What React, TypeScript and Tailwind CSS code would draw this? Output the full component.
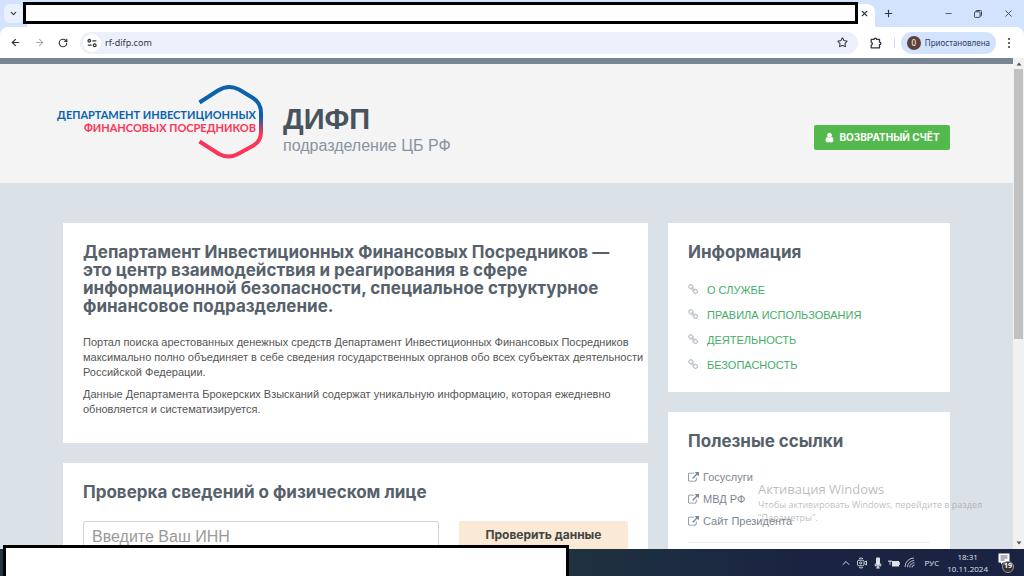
import type { ReactNode } from "react";
import { ArrowLeft, ArrowRight, ChevronDown, ChevronUp, Minus, Plus, RotateCw, Star, X } from "lucide-react";

const EXTERNAL_PATH =
  "M1408 928v320q0 119-84.5 203.5t-203.5 84.5h-832q-119 0-203.5-84.5t-84.5-203.5v-832q0-119 84.5-203.5t203.5-84.5h704q14 0 23 9t9 23v64q0 14-9 23t-23 9h-704q-66 0-113 47t-47 113v832q0 66 47 113t113 47h832q66 0 113-47t47-113v-320q0-14 9-23t23-9h64q14 0 23 9t9 23zm384-864v512q0 26-19 45t-45 19-45-19l-176-176-652 652q-10 10-23 10t-23-10l-114-114q-10-10-10-23t10-23l652-652-176-176q-19-19-19-45t19-45 45-19h512q26 0 45 19t19 45z";
const CHAIN_PATH =
  "M1456 1216q0-40-28-68l-208-208q-28-28-68-28-42 0-72 32 3 3 19 18.5t21.5 21.5 15 19 13 25.5 3.5 27.5q0 40-28 68t-68 28q-15 0-27.5-3.5t-25.5-13-19-15-21.5-21.5-18.5-19q-33 31-33 73 0 40 28 68l206 207q27 27 68 27 40 0 68-26l147-146q28-28 28-67zm-703-705q0-40-28-68l-206-207q-28-28-68-28-39 0-68 27l-147 146q-28 28-28 67 0 40 28 68l208 208q27 27 68 27 42 0 72-31-3-3-19-18.5t-21.5-21.5-15-19-13-25.5-3.5-27.5q0-40 28-68t68-28q15 0 27.5 3.5t25.5 13 19 15 21.5 21.5 18.5 19q33-31 33-73zm895 705q0 120-85 203l-147 146q-83 83-203 83-121 0-204-85l-206-207q-83-83-83-203 0-123 88-209l-88-88q-86 88-208 88-120 0-204-84l-208-208q-84-84-84-204t85-203l147-146q83-83 203-83 121 0 204 85l206 207q83 83 83 203 0 123-88 209l88 88q86-88 208-88 120 0 204 84l208 208q84 84 84 204z";
const USER_PATH =
  "M1536 1399q0 109-62.5 187t-150.5 78h-854q-88 0-150.5-78t-62.5-187q0-85 8.5-160.5t31.5-152 58.5-131 94-89 134.5-34.5q131 128 313 128t313-128q76 0 134.5 34.5t94 89 58.5 131 31.5 152 8.5 160.5zm-256-887q0 159-112.5 271.5t-271.5 112.5-271.5-112.5-112.5-271.5 112.5-271.5 271.5-112.5 271.5 112.5 112.5 271.5z";

function Glyph({ path, className }: { path: string; className: string }) {
  return (
    <svg viewBox="0 0 1792 1792" fill="currentColor" className={className} aria-hidden="true">
      <path d={path} />
    </svg>
  );
}

function IconButton({ label, className = "", children }: { label: string; className?: string; children: ReactNode }) {
  return (
    <button type="button" aria-label={label} className={`flex h-6 w-6 shrink-0 items-center justify-center ${className}`}>
      {children}
    </button>
  );
}

function TabStrip() {
  return (
    <div className="relative flex h-[27px] shrink-0 items-center bg-[#d3e2fd] pl-1">
      <button type="button" aria-label="Поиск вкладок" className="flex h-[19px] w-[19px] items-center justify-center rounded-md bg-[#e9f1fe]">
        <ChevronDown size={9} strokeWidth={3} />
      </button>
      <div className="mt-1 ml-1 flex h-[23px] flex-1 items-start justify-end rounded-t-lg bg-white pt-px pr-[3px]">
        <button type="button" aria-label="Закрыть вкладку" className="flex h-4 w-4 items-center justify-center">
          <X size={9} strokeWidth={3} />
        </button>
      </div>
      <IconButton label="Новая вкладка" className="ml-px">
        <Plus size={11} strokeWidth={2.4} />
      </IconButton>
      <div className="ml-9 flex items-center gap-1.5 pr-1">
        <IconButton label="Свернуть">
          <Minus size={9} strokeWidth={2} />
        </IconButton>
        <IconButton label="Восстановить">
          <svg viewBox="0 0 8 8" className="h-2 w-2" fill="none" stroke="currentColor" strokeWidth="0.9" aria-hidden="true">
            <rect x="0.5" y="1.8" width="5.6" height="5.6" rx="0.8" />
            <path d="M2 1.8V1.3a.8.8 0 0 1 .8-.8h3.6a1.1 1.1 0 0 1 1.1 1.1v3.6a.8.8 0 0 1-.8.8h-.5" />
          </svg>
        </IconButton>
        <IconButton label="Закрыть">
          <X size={11} strokeWidth={1.8} />
        </IconButton>
      </div>
      <div className="absolute top-0.5 right-[166px] left-[23px] h-[22px] border-3 border-black bg-white" />
    </div>
  );
}

function Toolbar() {
  return (
    <div className="bg-[#d3e2fd]">
      <div className="flex h-[31px] shrink-0 items-center rounded-t-lg bg-white pr-[3px] pl-[3px] font-['Noto_Sans',sans-serif] text-[#33373b]">
        <IconButton label="Назад">
          <ArrowLeft size={11} strokeWidth={2.4} />
        </IconButton>
        <IconButton label="Вперёд" className="text-[#a8aaad]">
          <ArrowRight size={11} strokeWidth={2.2} />
        </IconButton>
        <IconButton label="Обновить">
          <RotateCw size={10} strokeWidth={2.8} />
        </IconButton>
        <div className="ml-[5px] flex h-[22px] flex-1 items-center gap-1 rounded-full bg-[#ebf0fa] px-[3px]">
          <button type="button" aria-label="Сведения о сайте" className="flex h-[18px] w-[18px] items-center justify-center rounded-full bg-white">
            <svg viewBox="0 0 10 10" className="h-2.5 w-2.5" fill="none" stroke="currentColor" strokeWidth="1.3" aria-hidden="true">
              <circle cx="2.3" cy="2.8" r="1.3" />
              <path d="M5.3 2.8h4M.7 7.2h4" />
              <circle cx="7.7" cy="7.2" r="1.4" />
            </svg>
          </button>
          <input aria-label="Адресная строка" defaultValue="rf-difp.com" className="min-w-0 flex-1 bg-transparent text-[9px] leading-4 outline-none" />
          <IconButton label="Добавить в закладки">
            <Star size={11} strokeWidth={2.2} />
          </IconButton>
        </div>
        <IconButton label="Расширения" className="ml-1.5">
          <svg viewBox="0 0 12 12" className="h-3 w-3" fill="none" stroke="currentColor" strokeWidth="1.3" strokeLinejoin="round" aria-hidden="true">
            <path d="M1.2 2.4h2.900a1.300 1.300 0 0 1 2.600 0h2.800v2.700a1.300 1.300 0 0 1 0 2.600v3.100H1.200V8.100a1.500 1.500 0 0 0 0-2.900z" />
          </svg>
        </IconButton>
        <div className="mx-1.5 h-2.5 w-px bg-[#c8dcfb]" />
        <button type="button" className="flex h-[22px] items-center gap-1 rounded-full bg-[#d3e2fd] pr-1.5 pl-1.5 text-[8px] text-[#2b3f66]">
          <span className="flex h-3.5 w-3.5 items-center justify-center rounded-full bg-[#5d4037] text-[8px] text-white">0</span>
          Приостановлена
        </button>
        <IconButton label="Меню" className="ml-px">
          <svg viewBox="0 0 4 12" className="h-3 w-1" fill="currentColor" aria-hidden="true">
            <circle cx="2" cy="2" r="1" />
            <circle cx="2" cy="6" r="1" />
            <circle cx="2" cy="10" r="1" />
          </svg>
        </IconButton>
      </div>
    </div>
  );
}

function Logo() {
  return (
    <a href="#" className="block shrink-0" aria-label="Департамент инвестиционных финансовых посредников">
      <svg viewBox="0 0 200 76" className="h-[76px] w-[200px] overflow-visible">
        <defs>
          <linearGradient id="ring" gradientUnits="userSpaceOnUse" x1="0" y1="0" x2="0" y2="76">
            <stop offset="0" stopColor="#0a62ae" />
            <stop offset="0.42" stopColor="#0a62ae" />
            <stop offset="0.64" stopColor="#fc3459" />
            <stop offset="1" stopColor="#fc3459" />
          </linearGradient>
        </defs>
        <path
          d="M136.500 17.500L155 5.500Q165.500 -1 176 4.500L190 13Q198 18 198 28V47Q198 56 190.500 60.500L175 69Q165.500 74 156 69L136.500 56.500"
          fill="none"
          stroke="url(#ring)"
          strokeWidth="4"
          strokeLinejoin="round"
        />
        <text x="193" y="34" textAnchor="end" className="fill-[#0a62ae] font-['Lato',sans-serif] text-[11px] font-bold">
          ДЕПАРТАМЕНТ ИНВЕСТИЦИОННЫХ
        </text>
        <text x="193" y="47" textAnchor="end" className="fill-[#fc3459] font-['Lato',sans-serif] text-[11px] font-bold">
          ФИНАНСОВЫХ ПОСРЕДНИКОВ
        </text>
      </svg>
    </a>
  );
}

function SiteHeader() {
  return (
    <header className="h-[125px] shrink-0 border-t-6 border-[#778692] bg-[#f4f4f4]">
      <div className="mx-auto flex w-full max-w-[887px] items-start pt-[21px]">
        <Logo />
        <div className="ml-5 pt-5">
          <p className="text-[29px] leading-7 font-bold text-[#47535d]">ДИФП</p>
          <p className="mt-[3px] text-base leading-5 text-[#8794a0]">подразделение ЦБ РФ</p>
        </div>
        <a
          href="#"
          className="mt-10 ml-auto flex h-[25px] w-[136px] items-center justify-center gap-1 rounded-xs bg-[#54b94c] font-['Inter',sans-serif] text-[10px] font-bold text-white"
        >
          <Glyph path={USER_PATH} className="h-[11px] w-[11px]" />
          ВОЗВРАТНЫЙ СЧЁТ
        </a>
      </div>
    </header>
  );
}

const HEADING = "font-['Inter',sans-serif] font-bold text-[#56616b]";

const infoLinks = ["О СЛУЖБЕ", "ПРАВИЛА ИСПОЛЬЗОВАНИЯ", "ДЕЯТЕЛЬНОСТЬ", "БЕЗОПАСНОСТЬ"];
const usefulLinks = ["Госуслуги", "МВД РФ", "Сайт Президента"];

function MainColumn() {
  return (
    <main className="flex min-w-0 flex-1 flex-col gap-5">
      <section className="bg-white px-5 pt-5 pb-[26px]">
        <h1 className={`${HEADING} text-[17px] leading-[18px]`}>
          Департамент Инвестиционных Финансовых Посредников — это центр взаимодействия и реагирования в сфере информационной
          безопасности, специальное структурное финансовое подразделение.
        </h1>
        <p className="mt-5 text-[11px] leading-[15px] whitespace-nowrap text-[#555]">
          Портал поиска арестованных денежных средств Департамент Инвестиционных Финансовых Посредников
          <br />
          максимально полно объединяет в себе сведения государственных органов обо всех субъектах деятельности
          <br />
          Российской Федерации.
        </p>
        <p className="mt-[7px] text-[11px] leading-[15px] text-[#555]">
          Данные Департамента Брокерских Взысканий содержат уникальную информацию, которая ежедневно обновляется и
          систематизируется.
        </p>
      </section>
      <section className="bg-white p-5">
        <h2 className={`${HEADING} text-[17px] leading-[18px]`}>Проверка сведений о физическом лице</h2>
        <form className="mt-5 flex gap-5" onSubmit={(event) => event.preventDefault()}>
          <input
            aria-label="ИНН"
            placeholder="Введите Ваш ИНН"
            className="h-8 min-w-0 flex-1 rounded-xs border border-[#d5d5d5] px-2 text-base placeholder:text-[#999]"
          />
          <button type="submit" className="h-7 w-[169px] rounded-xs bg-[#f9e9d5] font-['Inter',sans-serif] text-xs font-bold text-[#444]">
            Проверить данные
          </button>
        </form>
      </section>
    </main>
  );
}

function Sidebar() {
  return (
    <aside className="flex w-[282px] shrink-0 flex-col gap-5">
      <section className="bg-white px-5 pt-5 pb-[15px]">
        <h2 className={`${HEADING} text-[17px] leading-[18px]`}>Информация</h2>
        <ul className="mt-4">
          {infoLinks.map((label) => (
            <li key={label} className="flex h-[25px] items-center gap-2">
              <Glyph path={CHAIN_PATH} className="h-[11px] w-[11px] text-[#b8c1c8]" />
              <a href="#" className="text-[11px] leading-4 text-[#45ad69]">
                {label}
              </a>
            </li>
          ))}
        </ul>
      </section>
      <section className="bg-white p-5">
        <h2 className={`${HEADING} text-[17px] leading-[18px]`}>Полезные ссылки</h2>
        <ul className="mt-4 border-b border-[#eee] pb-2.5">
          {usefulLinks.map((label) => (
            <li key={label} className="flex h-[22px] items-center">
              <a href="#" className="flex items-center gap-1 text-[11px] leading-4 text-[#7a8794]">
                <Glyph path={EXTERNAL_PATH} className="h-[11px] w-[11px]" />
                {label}
              </a>
            </li>
          ))}
        </ul>
        <div className="h-20" />
      </section>
    </aside>
  );
}

function Scrollbar() {
  return (
    <div className="flex w-[11px] shrink-0 flex-col items-center bg-[#f1f1f1] py-1" aria-hidden="true">
      <svg viewBox="0 0 6 4" className="h-1 w-1.5 fill-[#505050]">
        <path d="M3 .5L5.500 3.500H.5z" />
      </svg>
      <div className="mt-[3px] h-[270px] w-[9px] bg-[#c1c1c1]" />
      <svg viewBox="0 0 6 4" className="mt-auto h-1 w-1.5 fill-[#505050]">
        <path d="M3 3.500L5.500.5H.5z" />
      </svg>
    </div>
  );
}

function Taskbar() {
  return (
    <footer className="flex h-[27px] shrink-0 items-center justify-end bg-linear-to-r from-[#20353f] from-50% to-[#1a2342] to-80% pr-2.5 font-['Open_Sans',sans-serif] text-[8px] text-[#dfe3e8]">
      <div className="flex items-center gap-1">
        <ChevronUp size={12} strokeWidth={1.8} />
        <svg viewBox="0 0 12 12" className="h-3 w-3" fill="none" stroke="currentColor" strokeWidth="0.9" aria-hidden="true">
          <path d="M3 1.500Q5 .5 7 1.500M3 10.500Q5 11.500 7 10.500" />
          <rect x="1.500" y="3.200" width="6.500" height="5.600" rx="1.500" />
          <circle cx="4.700" cy="6" r="1.100" />
          <path d="M8.500 5.200L10.500 4v4L8.500 6.800" />
        </svg>
        <svg viewBox="0 0 12 12" className="h-3 w-3" fill="currentColor" aria-hidden="true">
          <rect x="4" y="0.500" width="4" height="7.500" rx="1" />
          <path d="M2.800 6.500h1v1.700h4.400V6.500h1v2.700H6.800v1.300h1v1H4.200v-1h1V9.200H2.800z" />
        </svg>
        <svg viewBox="0 0 12 10" className="h-2.5 w-3" fill="currentColor" aria-hidden="true">
          <path d="M4 3h7v1h.8v3H11v1.500H4z" />
          <path d="M.3 3.500h3.400M1 2v1.500M3 2v1.500M2 4v3" stroke="currentColor" strokeWidth="0.8" />
        </svg>
        <svg viewBox="0 0 12 12" className="h-3 w-3" fill="none" stroke="currentColor" strokeWidth="0.8" aria-hidden="true">
          <path d="M1 10A9 9 0 0 1 10 1M3.500 10.200A6.700 6.700 0 0 1 10.200 3.500M5.800 10.400A4.500 4.500 0 0 1 10.400 5.800M8 10.500A2.500 2.500 0 0 1 10.500 8" />
        </svg>
        <span className="ml-1">РУС</span>
      </div>
      <div className="ml-2 text-center leading-3">
        <div>18:31</div>
        <div>10.11.2024</div>
      </div>
      <div className="relative ml-2.5 h-5 w-4">
        <svg viewBox="0 0 12 12" className="h-3 w-3" aria-hidden="true">
          <path d="M.5.500h11v9H5l-2 2v-2H.500z" fill="#fff" />
          <path d="M2.500 3h7M2.500 5h7M2.500 7h4" stroke="#46506a" strokeWidth="0.900" />
        </svg>
        <span className="absolute right-0 bottom-0 flex h-3 w-3 items-center justify-center rounded-full border border-[#9a9a9a] bg-[#333] text-[7px] font-bold text-white">
          19
        </span>
      </div>
    </footer>
  );
}

function ActivationNotice() {
  return (
    <div className="pointer-events-none absolute right-8 bottom-[52px] w-[234px] font-['Open_Sans',sans-serif] text-[#8f8f8f]/60">
      <p className="text-[13px] leading-[18px]">Активация Windows</p>
      <p className="text-[9px] leading-[13px]">Чтобы активировать Windows, перейдите в раздел "Параметры".</p>
    </div>
  );
}

export default function App() {
  return (
    <div className="relative flex h-screen flex-col overflow-hidden font-['Liberation_Sans',sans-serif] text-[#33373b]">
      <TabStrip />
      <Toolbar />
      <div className="flex min-h-0 flex-1">
        <div className="min-w-0 flex-1 overflow-hidden bg-[#dae2e8]">
          <SiteHeader />
          <div className="mx-auto flex w-full max-w-[887px] items-start gap-5 pt-10">
            <MainColumn />
            <Sidebar />
          </div>
        </div>
        <Scrollbar />
      </div>
      <Taskbar />
      <ActivationNotice />
      <div className="absolute bottom-[-3px] left-[3px] h-[34px] w-[566px] border-3 border-black bg-white" />
    </div>
  );
}
